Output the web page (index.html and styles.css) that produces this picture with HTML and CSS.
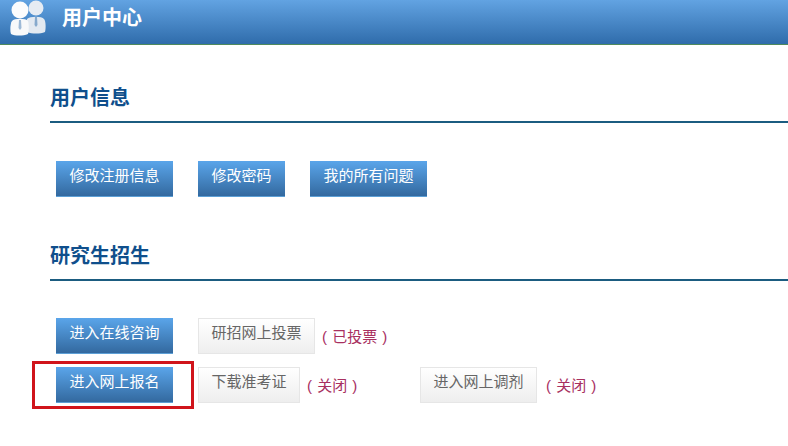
FILE: index.html
```html
<!DOCTYPE html>
<html lang="en">
<head>
    <meta charset="UTF-8">
    <meta name="viewport" content="width=device-width, initial-scale=1.0">
    <title>用户中心</title>
    <link rel="stylesheet" href="styles.css">
</head>
<body>
    <div class="top-bar">
        <svg class="top-icon" width="36" height="36" viewBox="0 0 36 36">
            <circle cx="26" cy="8" r="7.5" fill="#e6ecf3"/>
            <path d="M17 19 C20 16 32 16 34 19 C36 21 36 29 35 32 C30 34 22 34 17 32 Z" fill="#e2e9f1"/>
            <path d="M25 17 L27 17 L27.5 25 L26 27 L24.5 25 Z" fill="#86a9cc"/>
            <circle cx="10" cy="10" r="8.5" fill="#fbfcfd"/>
            <path d="M2 21 C4 18 16 18 18 21 C19 24 19 31 18 34 C13 36 5 36 1 34 C0 31 0 24 2 21 Z" fill="#f8f9fa"/>
            <path d="M9 20 L11 20 L11.5 28 L10 30 L8.5 28 Z" fill="#9db9d6"/>
        </svg>
        <span class="top-title">用户中心</span>
    </div>

    <div class="section">
        <h2 class="section-title">用户信息</h2>
        <div class="btn-row first-row">
            <a class="btn blue w117">修改注册信息</a>
            <a class="btn blue w87">修改密码</a>
            <a class="btn blue w117">我的所有问题</a>
        </div>
    </div>

    <div class="section second">
        <h2 class="section-title">研究生招生</h2>
        <div class="btn-row row-a">
            <a class="btn blue w117">进入在线咨询</a>
            <a class="btn gray w117">研招网上投票</a>
            <span class="note">( 已投票 )</span>
        </div>
        <div class="btn-row row-b">
            <a class="btn blue w117 marked">进入网上报名</a>
            <a class="btn gray w102">下载准考证</a>
            <span class="note closed">( 关闭 )</span>
            <a class="btn gray w117">进入网上调剂</a>
            <span class="note last">( 关闭 )</span>
        </div>
    </div>
</body>
</html>
```

FILE: styles.css
```css
body {
    margin: 0;
    min-height: 446px;
    font-family: "Liberation Sans", "Noto Sans CJK SC", sans-serif;
    background-color: #fff;
}
.top-bar {
    display: flex;
    align-items: flex-start;
    height: 44px;
    padding-left: 10px;
    background: linear-gradient(#62a3e2, #2f6cab);
    border-bottom: 1px solid #4f8a5c;
}
.top-title {
    margin-left: 16px;
    line-height: 37px;
    font-size: 20px;
    font-weight: bold;
    color: #fff;
}
.section {
    padding-left: 50px;
    padding-top: 36px;
}
.section.second {
    padding-top: 42px;
}
.section-title {
    margin: 0;
    height: 40px;
    line-height: 34px;
    font-size: 20px;
    color: #0f4f8c;
    border-bottom: 2px solid #1b5c80;
}
.btn-row {
    display: flex;
    align-items: flex-start;
    padding-left: 6px;
}
.first-row {
    margin-top: 38px;
    gap: 25px;
}
.row-a {
    margin-top: 37px;
}
.row-b {
    margin-top: 11px;
}
.btn {
    display: block;
    box-sizing: border-box;
    height: 36px;
    line-height: 30px;
    font-size: 15px;
    text-align: center;
}
.blue {
    color: #fff;
    background: linear-gradient(#5aa5ea, #33699f);
    border-bottom: 1px solid #5c9fd6;
}
.gray {
    color: #666;
    background: linear-gradient(#fff, #eeeeee);
    border: 1px solid #e6e6e6;
    line-height: 28px;
    margin-left: 25px;
}
.w117 { width: 117px; }
.w102 { width: 102px; }
.w87 { width: 87px; }
.note {
    margin-left: 7px;
    line-height: 38px;
    font-size: 15px;
    word-spacing: 1px;
    color: #a8305f;
    white-space: pre;
}
.note.closed {
    width: 88px;
}
.note.last {
    margin-left: 9px;
}
.marked {
    position: relative;
}
.marked::after {
    content: "";
    position: absolute;
    top: -6px;
    left: -24px;
    right: -21px;
    bottom: -7px;
    border: 3px solid #d0141b;
}
```
